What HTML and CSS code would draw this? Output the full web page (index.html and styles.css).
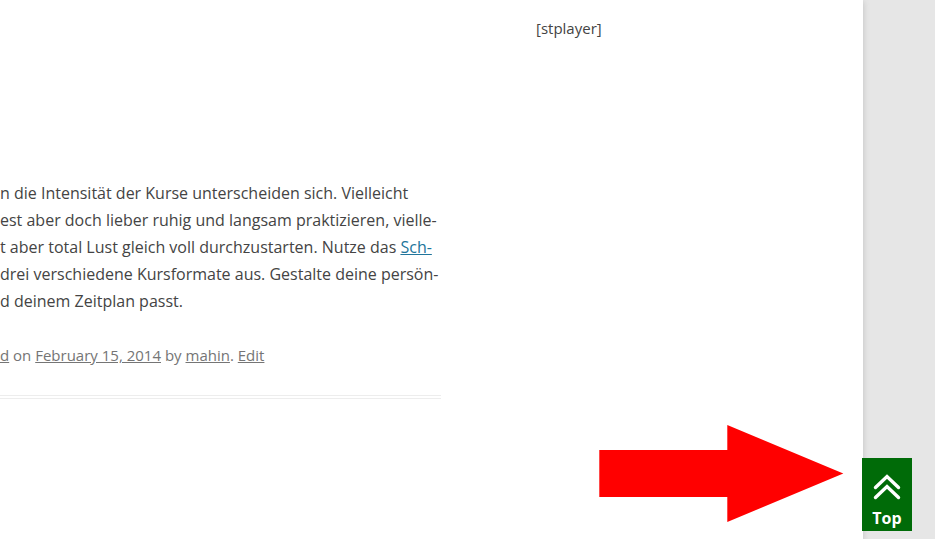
FILE: index.html
```html
<!DOCTYPE html>
<html lang="de">
<head>
<meta charset="utf-8">
<title>Kurse</title>
<link rel="stylesheet" href="styles.css">
</head>
<body>
<div class="page">
  <main class="content">
    <article class="entry">
      <p class="entry-text">n die Intensität der Kurse unterscheiden sich. Vielleicht<br>est aber doch lieber ruhig und langsam praktizieren, vielle-<br>t aber total Lust gleich voll durchzustarten. Nutze das <a href="#">Sch-</a><br>drei verschiedene Kursformate aus. Gestalte deine persön-<br>d deinem Zeitplan passt.</p>
      <footer class="entry-meta"><a href="#">d</a> on <a href="#">February 15, 2014</a> by <a href="#">mahin</a>. <a href="#">Edit</a></footer>
    </article>
  </main>
  <aside class="sidebar">[stplayer]</aside>
</div>
<svg class="pointer" width="246" height="99" viewBox="0 0 246 99" aria-hidden="true">
  <path fill="#f00" d="M1.3 26H129.3V1L245.300 49.500 129.300 98V73H1.300z"/>
</svg>
<a class="to-top" href="#">
  <svg width="30" height="30" viewBox="0 0 30 30" aria-hidden="true">
    <path fill="none" stroke="#fff" stroke-width="3.400" stroke-linecap="round" d="M3.500 16.500 15 5.500 26.500 16.500M3.500 26.500 15 15.500 26.500 26.500"/>
  </svg>
  <span>Top</span>
</a>
</body>
</html>
```
FILE: styles.css
```css
* {
  box-sizing: border-box;
}

body {
  margin: 0;
  min-height: 100vh;
  display: flex;
  overflow: hidden;
  background: #e6e6e6;
  color: #444;
  font-family: "Open Sans", sans-serif;
  font-size: 16px;
  line-height: 27px;
}

.page {
  flex: 1;
  display: flex;
  gap: 95px;
  margin-right: 72px;
  background: #fff;
  box-shadow: 0 2px 6px rgba(100, 100, 100, 0.3);
}

.content {
  flex: 0 0 441px;
  padding-top: 180px;
}

.entry {
  padding-bottom: 26px;
  border-bottom: 4px double #ededed;
}

.entry-text {
  margin: 0 0 27px;
  white-space: nowrap;
}

.entry-text a {
  color: #21759b;
}

.entry-meta {
  color: #757575;
  font-size: 15px;
}

.entry-meta a {
  color: inherit;
}

.sidebar {
  flex: 1;
  padding-top: 15px;
  font-size: 15px;
}

.pointer {
  position: fixed;
  right: 91px;
  bottom: 16px;
}

.to-top {
  position: fixed;
  right: 23px;
  bottom: 8px;
  display: flex;
  flex-direction: column;
  align-items: center;
  width: 50px;
  padding-top: 13px;
  background: #006b08;
  color: #fff;
  font-weight: 700;
  line-height: 24px;
  text-decoration: none;
}

.to-top span {
  padding: 5px 0 1px;
}
```
